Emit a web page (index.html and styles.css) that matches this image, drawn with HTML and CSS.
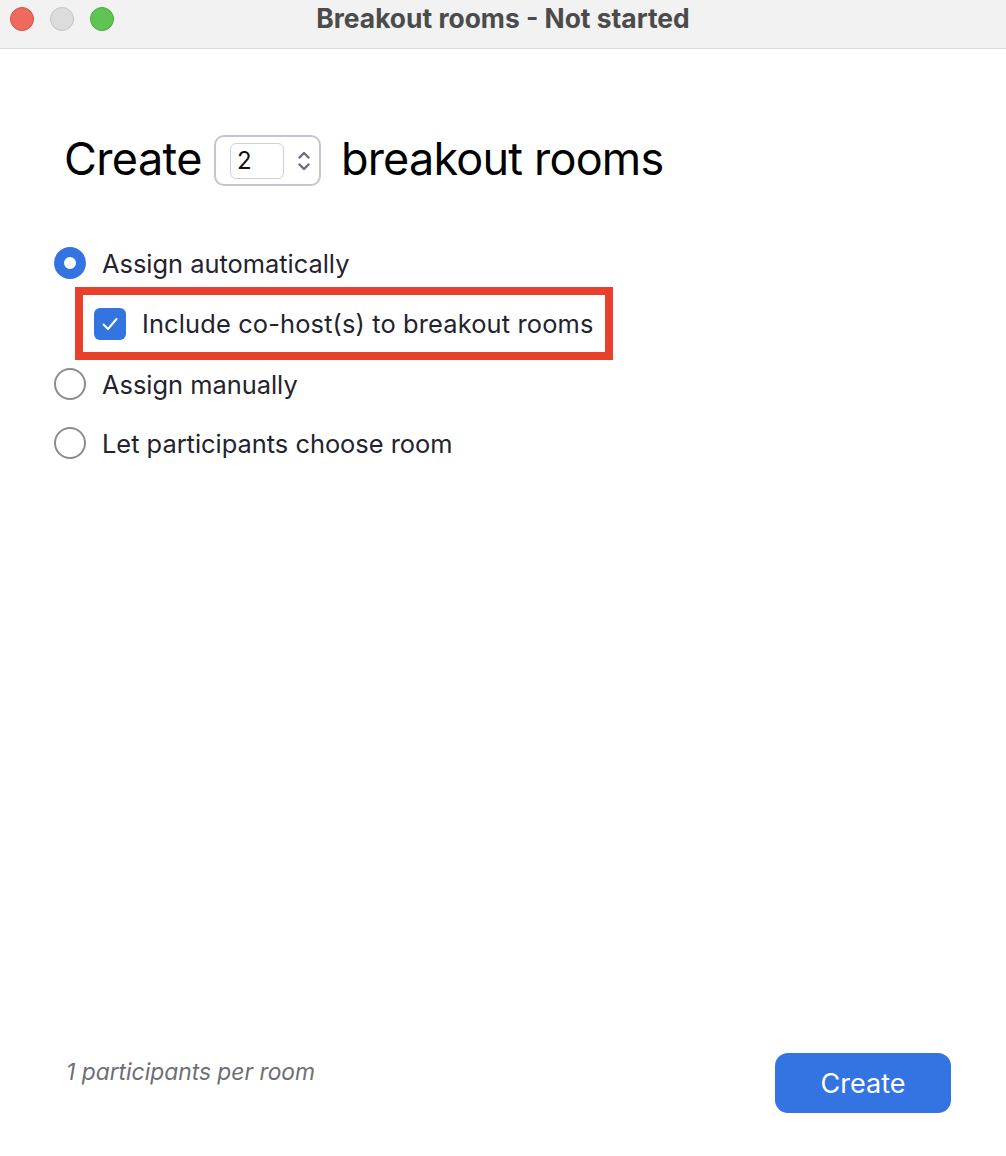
FILE: index.html
```html
<!DOCTYPE html>
<html>
<head>
<meta charset="utf-8">
<link rel="stylesheet" href="styles.css">
</head>
<body>
<div class="window">
  <header class="titlebar">
    <div class="lights">
      <span class="light red"></span>
      <span class="light grey"></span>
      <span class="light green"></span>
    </div>
    <div class="title">Breakout rooms - Not started</div>
  </header>
  <main class="content">
    <h1 class="heading">
      <span>Create</span>
      <span class="spinner">
        <span class="spin-input">2</span>
        <svg class="chev" width="14" height="24" viewBox="0 0 14 24"><path d="M2.5 8.5 L7 4 L11.5 8.5" fill="none" stroke="#6b6b80" stroke-width="2.4" stroke-linecap="round" stroke-linejoin="round"/><path d="M2.5 15.5 L7 20 L11.5 15.5" fill="none" stroke="#6b6b80" stroke-width="2.4" stroke-linecap="round" stroke-linejoin="round"/></svg>
      </span>
      <span class="rooms">breakout rooms</span>
    </h1>
    <div class="options">
      <div class="option">
        <span class="radio checked"></span>
        <span class="label">Assign automatically</span>
      </div>
      <div class="highlight">
        <div class="check-row">
          <span class="checkbox"><svg width="32" height="32" viewBox="0 0 32 32"><path d="M9.5 16.5 L14 21 L22.5 11" fill="none" stroke="#fff" stroke-width="2" stroke-linecap="round" stroke-linejoin="round"/></svg></span>
          <span class="label wide">Include co-host(s) to breakout rooms</span>
        </div>
      </div>
      <div class="option">
        <span class="radio"></span>
        <span class="label">Assign manually</span>
      </div>
      <div class="option">
        <span class="radio"></span>
        <span class="label">Let participants choose room</span>
      </div>
    </div>
    <div class="spacer"></div>
    <footer class="footer">
      <span class="note">1 participants per room</span>
      <button class="create">Create</button>
    </footer>
  </main>
</div>
</body>
</html>
```
FILE: styles.css
```css
* { box-sizing: border-box; }
html, body { margin: 0; padding: 0; background: #fff; }
body { font-family: Inter, "Noto Sans", "Liberation Sans", sans-serif; width: 1006px; height: 1156px; overflow: hidden; }
.window { display: flex; flex-direction: column; height: 1156px; }
.titlebar {
  height: 49px; background: #f2f2f2; border-bottom: 1px solid #dcdcdc;
  display: flex; align-items: center; position: relative;
}
.lights { display: flex; gap: 16px; padding-left: 10px; margin-top: -10px; }
.light { width: 24px; height: 24px; border-radius: 50%; display: block; }
.red { background: #ee6a5e; border: 1px solid #d85246; }
.grey { background: #dcdcdc; border: 1px solid #c4c4c4; }
.green { background: #5fc454; border: 1px solid #4aa93f; }
.title {
  position: absolute; left: 0; right: 0; top: 2px; text-align: center;
  font-weight: 700; font-size: 26.4px; color: #4b4b4b; letter-spacing: 0;
}
.content { flex: 1; display: flex; flex-direction: column; padding: 0 55px 43px 54px; }
.heading {
  margin: 82px 0 0 10px; display: flex; align-items: center; gap: 14px;
  font-size: 45px; font-weight: 400; color: #000; letter-spacing: -0.6px; line-height: 54px;
}
.rooms { margin-left: 6px; letter-spacing: -0.8px; }
.spinner {
  width: 107px; height: 51px; border: 2px solid #c6c4d4; border-radius: 10px;
  display: flex; align-items: center; padding-left: 14px; gap: 13px; margin-top: 4px; margin-left: -2px;
}
.spin-input {
  width: 54px; height: 36px; border: 1px solid #cfcfda; border-radius: 6px;
  font-size: 24px; letter-spacing: 0; line-height: 34px; padding-left: 6px; color: #111;
}
.chev { display: block; }
.options { margin-top: 47px; display: flex; flex-direction: column; }
.option { display: flex; align-items: center; height: 60px; gap: 16px; }
.option:last-child { height: 58px; }
.radio {
  width: 32px; height: 32px; border-radius: 50%; border: 2px solid #8c8c8c; background: #fff; flex: none;
}
.radio.checked { border: 10px solid #3474e0; }
.label { font-size: 25.4px; color: #23232f; letter-spacing: 0; }
.label.wide { letter-spacing: 0.15px; }
.highlight {
  margin-left: 21px; width: 538px; height: 73px; border: 8px solid #e8402a;
  display: flex; align-items: center; padding-left: 11px; margin-top: -6px; margin-bottom: -6px;
}
.check-row { display: flex; align-items: center; gap: 16px; }
.checkbox {
  width: 32px; height: 32px; background: #3474e0; border-radius: 6px; display: block; flex: none;
}
.checkbox svg { display: block; }
.spacer { flex: 1; }
.footer { display: flex; justify-content: space-between; align-items: flex-end; }
.note { font-style: italic; font-size: 22.8px; color: #6e6e78; margin-left: 12px; margin-bottom: 28px; }
.create {
  width: 176px; height: 60px; border: none; border-radius: 13px; background: #3473e2;
  color: #fff; font-family: inherit; font-size: 27px; padding: 0;
}
```
